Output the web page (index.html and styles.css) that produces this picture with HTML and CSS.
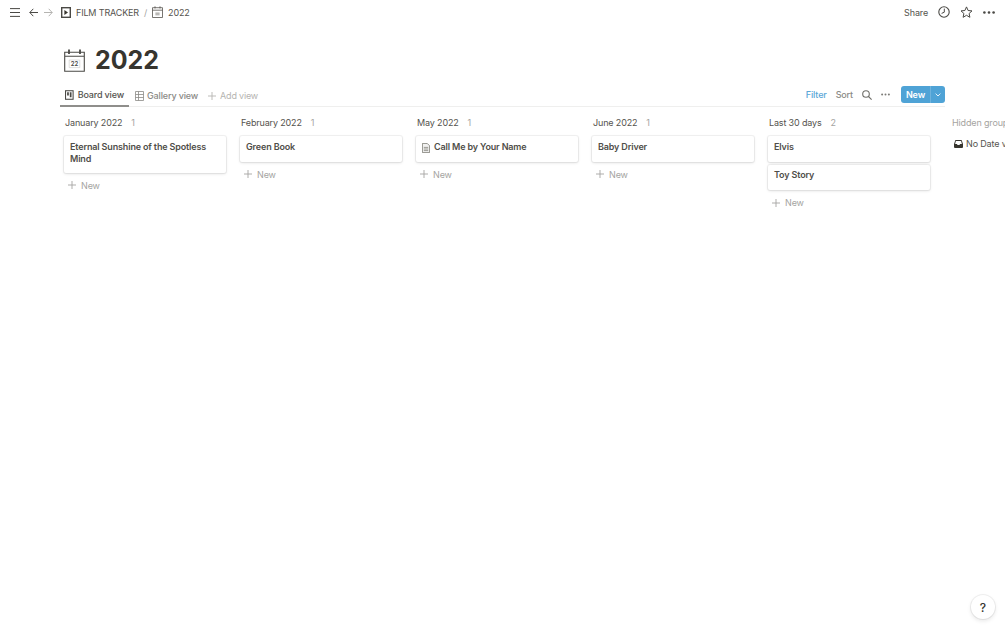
FILE: index.html
```html
<!DOCTYPE html>
<html lang="en">
<head>
<meta charset="utf-8">
<title>2022</title>
<link rel="stylesheet" href="styles.css">
</head>
<body>
<header class="topbar">
  <div class="crumbs">
    <svg class="ic-menu" width="10" height="9" viewBox="0 0 10 9"><path d="M0 .6h10M0 4.5h10M0 8.4h10" stroke="#4a4945" stroke-width="1" fill="none"/></svg>
    <svg class="ic-back" width="9" height="9" viewBox="0 0 9 9"><path d="M9 4.5H.8M4.3.8.8 4.5l3.5 3.7" stroke="#4a4945" stroke-width="1" fill="none"/></svg>
    <svg class="ic-fwd" width="9" height="9" viewBox="0 0 9 9"><path d="M0 4.5h8.2M4.7.8l3.5 3.7-3.5 3.7" stroke="#b5b4b1" stroke-width="1" fill="none"/></svg>
    <svg class="ic-film" width="10" height="11" viewBox="0 0 10 11"><path d="M0 0h10v11H0z" fill="#4a4945"/><path d="M1.4 1.4h7.2v8.2H1.4z" fill="#fff"/><path d="M3.4 3.1 7 5.5 3.4 7.9z" fill="#37352f"/></svg>
    <span class="crumb">FILM TRACKER</span>
    <span class="slash">/</span>
    <svg class="ic-cal-small" width="11" height="12" viewBox="0 0 11 12"><path d="M.5 1.7h10v9.8H.5zM.5 4.2h10" stroke="#55534e" stroke-width=".8" fill="none"/><path d="M3 .4v2M8 .4v2" stroke="#55534e" stroke-width=".9"/><path d="M3.4 6.4h4.2v3H3.4z" fill="#b9b8b5"/></svg>
    <span class="crumb">2022</span>
  </div>
  <div class="actions">
    <span class="share">Share</span>
    <svg width="12" height="12" viewBox="0 0 12 12"><circle cx="6" cy="6" r="5.2" stroke="#4a4945" stroke-width="1.1" fill="none"/><path d="M6.3 2.6v3.6L3.6 7.4" stroke="#4a4945" stroke-width="1" fill="none"/></svg>
    <svg width="13" height="12" viewBox="0 0 13 12"><path d="m6.5.9 1.6 3.6 3.9.4-2.9 2.6.8 3.8-3.4-2-3.4 2 .8-3.8L1 4.9l3.9-.4z" stroke="#4a4945" stroke-width="1" fill="none" stroke-linejoin="round"/></svg>
    <svg class="ic-dots" width="12" height="3" viewBox="0 0 12 3"><circle cx="1.4" cy="1.5" r="1.3" fill="#4a4945"/><circle cx="6" cy="1.5" r="1.3" fill="#4a4945"/><circle cx="10.6" cy="1.5" r="1.3" fill="#4a4945"/></svg>
  </div>
</header>

<main class="page">
  <div class="title-row">
    <svg width="21" height="23" viewBox="0 0 21 23"><path d="M.7 3.2h19.6v19H.7zM.7 7.2h19.6" stroke="#4a4945" stroke-width="1.1" fill="none"/><path d="M5 .6v4.4M16 .6v4.4" stroke="#4a4945" stroke-width="1.8"/><path d="M5.2 11h10.6v7.6H5.2z" stroke="#c9c8c6" stroke-width=".6" fill="none"/><text class="cal-num" x="10.5" y="17.4" text-anchor="middle">22</text></svg>
    <h1 class="title">2022</h1>
  </div>

  <div class="views">
    <div class="tabs">
      <div class="tab tab-active">
        <svg width="9" height="10" viewBox="0 0 9 10"><path d="M0 0h9v10H0z" fill="#4a4945"/><path d="M1.1 1.1h6.8v7.8H1.1z" fill="#fff"/><path d="M2.2 2.2h1.8v3.4H2.2zM5 2.2h1.8v5.2H5z" fill="#4a4945"/></svg>
        <span>Board view</span>
      </div>
      <div class="tab tab-gallery">
        <svg width="9" height="10" viewBox="0 0 9 10"><path d="M.5.5h8v9h-8zM.5 3.5h8M.5 6.5h8M3.5 .5v9" stroke="#8b8a86" stroke-width=".8" fill="none"/></svg>
        <span>Gallery view</span>
      </div>
      <div class="tab tab-add">
        <svg width="8" height="8" viewBox="0 0 8 8"><path d="M4 0v8M0 4h8" stroke="#b5b4b1" stroke-width=".9"/></svg>
        <span>Add view</span>
      </div>
    </div>
    <div class="tools">
      <span class="filter">Filter</span>
      <span class="sort">Sort</span>
      <svg width="10" height="10" viewBox="0 0 10 10"><circle cx="4" cy="4" r="3.3" stroke="#6f6e69" stroke-width="1.1" fill="none"/><path d="m6.4 6.4 3.2 3.2" stroke="#6f6e69" stroke-width="1.2"/></svg>
      <svg width="9" height="3" viewBox="0 0 9 3"><circle cx="1.1" cy="1.5" r="1" fill="#7d7c78"/><circle cx="4.5" cy="1.5" r="1" fill="#7d7c78"/><circle cx="7.9" cy="1.5" r="1" fill="#7d7c78"/></svg>
      <div class="new-btn">
        <span class="new-label">New</span>
        <span class="new-caret"><svg width="6" height="4" viewBox="0 0 6 4"><path d="m.6.6 2.4 2.4L5.4.6" stroke="#fff" stroke-width="1" fill="none" opacity=".85"/></svg></span>
      </div>
    </div>
  </div>

  <div class="board">
    <section class="col">
      <h2 class="col-head">January 2022<span class="count">1</span></h2>
      <article class="card">Eternal Sunshine of the Spotless Mind</article>
      <div class="add"><svg width="8" height="8" viewBox="0 0 8 8"><path d="M4 0v8M0 4h8" stroke="#a5a4a1" stroke-width=".9"/></svg>New</div>
    </section>
    <section class="col">
      <h2 class="col-head">February 2022<span class="count">1</span></h2>
      <article class="card">Green Book</article>
      <div class="add"><svg width="8" height="8" viewBox="0 0 8 8"><path d="M4 0v8M0 4h8" stroke="#a5a4a1" stroke-width=".9"/></svg>New</div>
    </section>
    <section class="col">
      <h2 class="col-head">May 2022<span class="count">1</span></h2>
      <article class="card card-icon">
        <svg width="8" height="10" viewBox="0 0 8 10"><path d="M.4.4h4.8l2.4 2.4v6.8H.4z" stroke="#77766f" stroke-width=".8" fill="#f1f1f0"/><path d="M1.8 4.4h4.4M1.8 6h4.4M1.8 7.6h4.4" stroke="#77766f" stroke-width=".7"/></svg>
        <span>Call Me by Your Name</span>
      </article>
      <div class="add"><svg width="8" height="8" viewBox="0 0 8 8"><path d="M4 0v8M0 4h8" stroke="#a5a4a1" stroke-width=".9"/></svg>New</div>
    </section>
    <section class="col">
      <h2 class="col-head">June 2022<span class="count">1</span></h2>
      <article class="card">Baby Driver</article>
      <div class="add"><svg width="8" height="8" viewBox="0 0 8 8"><path d="M4 0v8M0 4h8" stroke="#a5a4a1" stroke-width=".9"/></svg>New</div>
    </section>
    <section class="col">
      <h2 class="col-head">Last 30 days<span class="count">2</span></h2>
      <article class="card">Elvis</article>
      <article class="card">Toy Story</article>
      <div class="add"><svg width="8" height="8" viewBox="0 0 8 8"><path d="M4 0v8M0 4h8" stroke="#a5a4a1" stroke-width=".9"/></svg>New</div>
    </section>
    <section class="hidden-col">
      <h2 class="hidden-head">Hidden groups</h2>
      <div class="hidden-item">
        <svg width="9" height="8" viewBox="0 0 9 8"><path d="M1.4 0h6.2L9 4v3a1 1 0 0 1-1 1H1a1 1 0 0 1-1-1V4z" fill="#37352f"/><path d="M1.9 1h5.2l.8 3H6L5.5 5h-2L3 4H1.1z" fill="#fff"/></svg>
        <span>No Date view</span>
      </div>
    </section>
  </div>
</main>

<div class="help">?</div>
</body>
</html>
```
FILE: styles.css
```css
* { box-sizing: border-box; }
html, body { height: 100%; }
body {
  margin: 0;
  width: 1005px;
  height: 628px;
  overflow: hidden;
  position: relative;
  background: #fff;
  color: #37352f;
  font-family: Inter, "Liberation Sans", sans-serif;
  font-size: 9px;
  letter-spacing: -.15px;
}
.topbar {
  height: 24px;
  display: flex;
  align-items: center;
  justify-content: space-between;
  padding: 0 10px;
}
.crumbs { display: flex; align-items: center; }
.ic-back { margin-left: 9px; }
.ic-fwd { margin-left: 6px; }
.ic-film { margin-left: 8px; }
.crumb { color: #55534e; margin-left: 5px; }
.slash { color: #a5a4a1; margin: 0 5px; }
.actions { display: flex; align-items: center; gap: 10px; }
.share { color: #55534e; }
.page { padding-left: 60px; }
.title-row {
  display: flex;
  align-items: center;
  gap: 10px;
  padding: 13px 0 0 4px;
  height: 59px;
}
.cal-num { font-size: 6px; font-weight: 600; fill: #4a4945; letter-spacing: 0; }
.title {
  margin: 0;
  font-size: 25px;
  font-weight: 700;
  line-height: 27px;
  color: #37352f;
  letter-spacing: 0;
}
.views {
  width: 885px;
  height: 24px;
  display: flex;
  align-items: center;
  justify-content: space-between;
  border-bottom: 1px solid #efefee;
}
.tabs { display: flex; height: 24px; align-items: stretch; }
.tab {
  display: flex;
  align-items: center;
  gap: 4px;
  padding: 2px 5px 0;
  color: #8b8a86;
  font-weight: 500;
  white-space: nowrap;
}
.tab-active {
  color: #55534e;
  border-bottom: 2px solid #8f8e8b;
  margin-right: 1px;
  width: 69px;
}
.tab-gallery { gap: 3px; }
.tab-add { color: #b5b4b1; font-weight: 400; letter-spacing: -.2px; }
.tools { display: flex; align-items: center; gap: 9px; }
.filter { color: #5aa7d8; font-weight: 500; }
.sort { color: #8b8a86; font-weight: 500; }
.new-btn {
  display: flex;
  height: 17px;
  margin-left: 2px;
  border-radius: 3px;
  background: #4fa3d6;
  color: #fff;
  overflow: hidden;
}
.new-label {
  width: 29px;
  line-height: 17px;
  text-align: center;
  font-weight: 600;
}
.new-caret {
  width: 15px;
  display: flex;
  align-items: center;
  justify-content: center;
  border-left: 1px solid #6fb3dd;
}
.board {
  display: flex;
  align-items: flex-start;
  padding-left: 3px;
}
.col { width: 164px; margin-right: 12px; flex: none; }
.col-head, .hidden-head {
  margin: 0;
  height: 29px;
  padding: 10px 0 0 2px;
  font-size: 9px;
  line-height: 12px;
  font-weight: 400;
  color: #55534e;
}
.count { margin-left: 9px; color: #a5a4a1; }
.card {
  background: #fff;
  border-radius: 2px;
  box-shadow: 0 0 0 1px rgba(15, 15, 15, .05), 0 1px 3px rgba(15, 15, 15, .12);
  margin: 0 1px 3px;
  padding: 4.5px 6px 7px;
  min-height: 25.5px;
  font-weight: 600;
  line-height: 12.5px;
  color: #4f4e49;
}
.card-icon { display: flex; align-items: flex-start; gap: 4px; }
.card-icon svg { margin-top: 2px; flex: none; }
.add {
  display: flex;
  align-items: center;
  gap: 5px;
  height: 19px;
  padding-left: 5px;
  color: #a5a4a1;
}
.hidden-col { flex: none; width: 62px; margin-left: 9px; white-space: nowrap; }
.hidden-head { padding-left: 0; color: #a5a4a1; }
.hidden-item {
  display: flex;
  align-items: center;
  gap: 3px;
  padding-left: 2px;
  color: #55534e;
  line-height: 12px;
  margin-top: 2px;
}
.hidden-item svg { flex: none; }
.help {
  position: absolute;
  right: 10px;
  bottom: 9px;
  width: 24px;
  height: 24px;
  border-radius: 50%;
  background: #fff;
  box-shadow: 0 0 0 1px rgba(15, 15, 15, .06), 0 2px 4px rgba(15, 15, 15, .1);
  display: flex;
  align-items: center;
  justify-content: center;
  font-size: 12px;
  font-weight: 500;
  letter-spacing: 0;
  color: #37352f;
}
```
